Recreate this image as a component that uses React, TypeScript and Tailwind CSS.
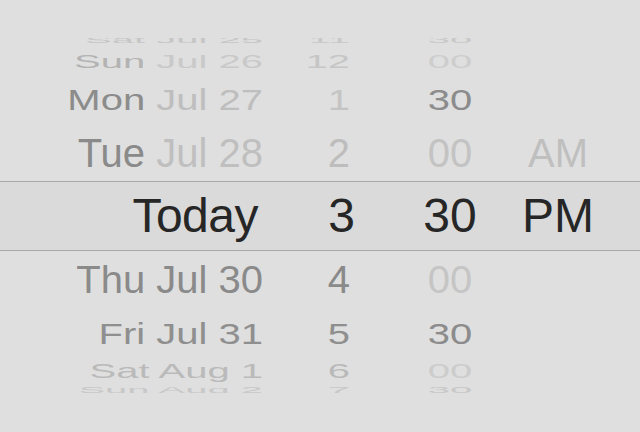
type Part = { text: string; color: string };

type Row = {
  h: string;
  scale: string;
  date: Part[];
  hour?: Part;
  minute?: Part;
  ampm?: Part;
};

// wheel rows above and below the selection band, far rows squashed like on a drum
const above: Row[] = [
  {
    h: 'h-[12px]',
    scale: 'scale-y-[0.22]',
    date: [{ text: 'Sat Jul 25', color: 'text-[#c6c6c6]' }],
    hour: { text: '11', color: 'text-[#c8c8c8]' },
    minute: { text: '30', color: 'text-[#c8c8c8]' },
  },
  {
    h: 'h-[29px]',
    scale: 'scale-y-[0.47]',
    date: [
      { text: 'Sun', color: 'text-[#b3b3b3]' },
      { text: 'Jul 26', color: 'text-[#c9c9c9]' },
    ],
    hour: { text: '12', color: 'text-[#c6c6c6]' },
    minute: { text: '00', color: 'text-[#cdcdcd]' },
  },
  {
    h: 'h-[49px]',
    scale: 'scale-y-[0.73]',
    date: [
      { text: 'Mon', color: 'text-[#8c8c8c]' },
      { text: 'Jul 27', color: 'text-[#bebebe]' },
    ],
    hour: { text: '1', color: 'text-[#c4c4c4]' },
    minute: { text: '30', color: 'text-[#8c8c8c]' },
  },
  {
    h: 'h-[57px]',
    scale: 'scale-y-[1]',
    date: [
      { text: 'Tue', color: 'text-[#8a8a8a]' },
      { text: 'Jul 28', color: 'text-[#bfbfbf]' },
    ],
    hour: { text: '2', color: 'text-[#bdbdbd]' },
    minute: { text: '00', color: 'text-[#c3c3c3]' },
    ampm: { text: 'AM', color: 'text-[#bfbfbf]' },
  },
];

const below: Row[] = [
  {
    h: 'h-[56px]',
    scale: 'scale-y-[0.98]',
    date: [{ text: 'Thu Jul 30', color: 'text-[#8a8a8a]' }],
    hour: { text: '4', color: 'text-[#8a8a8a]' },
    minute: { text: '00', color: 'text-[#c5c5c5]' },
  },
  {
    h: 'h-[53px]',
    scale: 'scale-y-[0.73]',
    date: [{ text: 'Fri Jul 31', color: 'text-[#8f8f8f]' }],
    hour: { text: '5', color: 'text-[#8f8f8f]' },
    minute: { text: '30', color: 'text-[#8c8c8c]' },
  },
  {
    h: 'h-[22px]',
    scale: 'scale-y-[0.49]',
    date: [{ text: 'Sat Aug 1', color: 'text-[#bababa]' }],
    hour: { text: '6', color: 'text-[#b9b9b9]' },
    minute: { text: '00', color: 'text-[#cccccc]' },
  },
  {
    h: 'h-[16px]',
    scale: 'scale-y-[0.22]',
    date: [{ text: 'Sun Aug 2', color: 'text-[#c8c8c8]' }],
    hour: { text: '7', color: 'text-[#c8c8c8]' },
    minute: { text: '30', color: 'text-[#c8c8c8]' },
  },
];

function WheelRow({ row }: { row: Row }) {
  return (
    <div className={`${row.h} flex items-center`}>
      <div className={`flex w-full items-center text-[40px] leading-none ${row.scale}`}>
        <div className="w-[263px] text-right whitespace-nowrap">
          {row.date.map((p, i) => (
            <span key={i} className={p.color}>
              {i > 0 ? ' ' : ''}
              {p.text}
            </span>
          ))}
        </div>
        <div className={`w-[87px] text-right ${row.hour?.color ?? ''}`}>{row.hour?.text}</div>
        <div className={`ml-[50px] w-[100px] text-center ${row.minute?.color ?? ''}`}>
          {row.minute?.text}
        </div>
        <div className={`w-[116px] text-center ${row.ampm?.color ?? ''}`}>{row.ampm?.text}</div>
      </div>
    </div>
  );
}

export default function App() {
  return (
    <div
      className="w-[640px] h-[432px] overflow-hidden bg-[#dfdfdf] pt-[38px]"
      style={{ fontFamily: '"Liberation Sans", Arial, sans-serif' }}
    >
      {/* Picker wheel */}
      <div className="h-[355px] overflow-hidden">
        <div className="-mt-[4px]">
          {above.map((row, i) => (
            <WheelRow key={`a${i}`} row={row} />
          ))}

          {/* Selection band */}
          <div className="h-[70px] border-y border-[#a7a7a7] bg-[#dadada] flex items-center text-[48px] leading-none text-[#262626]">
            <div className="w-[263px] text-right pr-[5px] tracking-[-0.5px]">Today</div>
            <div className="w-[87px] text-right">
              <span className="inline-block -mr-[5px]">3</span>
            </div>
            <div className="ml-[50px] w-[100px] text-center">30</div>
            <div className="w-[116px] text-center">PM</div>
          </div>

          {below.map((row, i) => (
            <WheelRow key={`b${i}`} row={row} />
          ))}
        </div>
      </div>
    </div>
  );
}
